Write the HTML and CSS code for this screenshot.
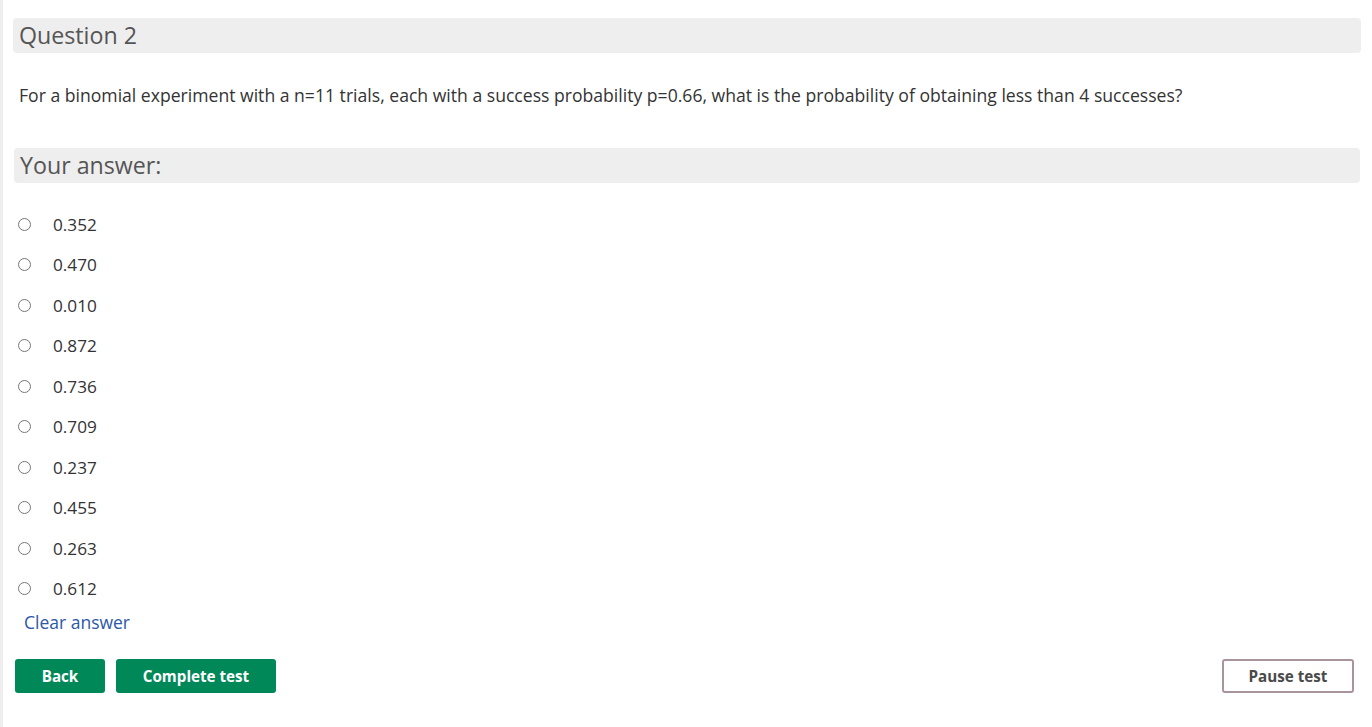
FILE: index.html
```html
<!DOCTYPE html>
<html>
<head>
<meta charset="utf-8">
<link rel="stylesheet" href="styles.css">
</head>
<body>
<div class="page">
  <div class="qhead">Question 2</div>
  <p class="qtext">For a binomial experiment with a n=11 trials, each with a success probability p=0.66, what is the probability of obtaining less than 4 successes?</p>
  <div class="ahead">Your answer:</div>
  <ul class="options">
    <li><label><input type="radio" name="a"><span>0.352</span></label></li>
    <li><label><input type="radio" name="a"><span>0.470</span></label></li>
    <li><label><input type="radio" name="a"><span>0.010</span></label></li>
    <li><label><input type="radio" name="a"><span>0.872</span></label></li>
    <li><label><input type="radio" name="a"><span>0.736</span></label></li>
    <li><label><input type="radio" name="a"><span>0.709</span></label></li>
    <li><label><input type="radio" name="a"><span>0.237</span></label></li>
    <li><label><input type="radio" name="a"><span>0.455</span></label></li>
    <li><label><input type="radio" name="a"><span>0.263</span></label></li>
    <li><label><input type="radio" name="a"><span>0.612</span></label></li>
  </ul>
  <a class="clear" href="#">Clear answer</a>
  <div class="actions">
    <button class="btn green back">Back</button>
    <button class="btn green complete">Complete test</button>
    <span class="spacer"></span>
    <button class="btn outline">Pause test</button>
  </div>
</div>
</body>
</html>
```

FILE: styles.css
```css
html, body {
  margin: 0;
  padding: 0;
  background: #fff;
}
body {
  font-family: "Open Sans", "Liberation Sans", sans-serif;
  color: #333;
}
.page {
  border-left: 3px solid #eeeeee;
  min-height: 727px;
  box-sizing: border-box;
  padding: 18px 11px 0 10px;
}
.qhead, .ahead {
  background: #eeeeee;
  border-radius: 4px;
  font-size: 23.2px;
  line-height: 34px;
  height: 35px;
  color: #555;
  padding-left: 6px;
  font-weight: 400;
}
.ahead {
  margin-left: 1px;
  margin-right: 1px;
}
.qtext {
  margin: 31px 0 0 6px;
  font-size: 17.6px;
  line-height: 22px;
  color: #333;
}
.ahead {
  margin-top: 42px;
}
.options {
  list-style: none;
  margin: 29px 0 0 0;
  padding: 0;
}
.options li {
  height: 40.56px;
}
.options label {
  display: flex;
  align-items: center;
  height: 24px;
  font-size: 17.2px;
  color: #333;
}
.options input {
  width: 13px;
  height: 13px;
  margin: 0 0 0 5px;
  accent-color: #666;
}
.options span {
  margin-left: 22px;
}
.clear {
  display: block;
  margin: -7px 0 0 11px;
  font-size: 17.5px;
  line-height: 24px;
  color: #2b58a8;
  text-decoration: none;
}
.actions {
  display: flex;
  align-items: center;
  margin-top: 25px;
  padding-left: 2px;
  gap: 11px;
}
.spacer { flex: 1; }
.btn {
  font-family: "Open Sans", "Liberation Sans", sans-serif;
  font-weight: 700;
  font-size: 15.2px;
  height: 34px;
  border-radius: 3px;
  cursor: pointer;
  padding: 0;
}
.green {
  background: #008858;
  color: #fff;
  border: none;
}
.back { width: 90px; }
.complete { width: 160px; }
.outline {
  background: #fff;
  color: #4a4a4a;
  border: 2px solid #a8949f;
  width: 132px;
  margin-right: 7px;
}
```
